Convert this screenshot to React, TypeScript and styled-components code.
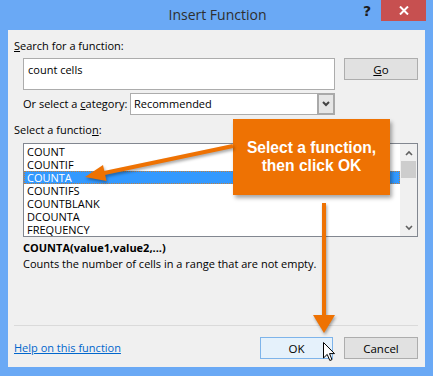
import React from 'react';
import styled, { createGlobalStyle } from 'styled-components';

const GlobalStyle = createGlobalStyle`
  html, body { margin: 0; padding: 0; background: #ffffff; }
  body { font-family: 'Open Sans', 'Liberation Sans', sans-serif; }
`;

const ORANGE = '#ee7203';

const Window = styled.div`
  position: relative;
  width: 433px;
  height: 376px;
  box-sizing: border-box;
  background: #6aa9f5;
  display: flex;
  flex-direction: column;
  overflow: hidden;
`;

const TitleBar = styled.div`
  height: 30px;
  flex: none;
  display: grid;
  grid-template-columns: 1fr auto 1fr;
  align-items: start;
`;

const Title = styled.div`
  grid-column: 2;
  font-size: 14px;
  line-height: 30px;
  color: #2e2e2e;
  padding-left: 2px;
`;

const TitleButtons = styled.div`
  grid-column: 3;
  display: flex;
  justify-content: flex-end;
  padding-right: 7px;
`;

const HelpGlyph = styled.div`
  width: 28px;
  height: 21px;
  font-family: 'DejaVu Sans', sans-serif;
  font-weight: bold;
  font-size: 14px;
  line-height: 22px;
  text-align: center;
  color: #1c1c1c;
`;

const CloseButton = styled.div`
  width: 45px;
  height: 21px;
  background: #c75050;
  display: flex;
  align-items: center;
  justify-content: center;
`;

const Client = styled.div`
  flex: 1;
  margin: 0 8px 9px 8px;
  background: #f0f0f0;
  padding: 0 7px 8px 6px;
  display: flex;
  flex-direction: column;
  font-size: 11px;
  color: #000;
`;

const Label = styled.div<{ $top?: number }>`
  line-height: 16px;
  margin-top: ${(p) => p.$top ?? 0}px;
  white-space: nowrap;
`;

const Key = styled.span`
  text-decoration: underline;
`;

const Row = styled.div<{ $top: number }>`
  display: flex;
  align-items: flex-start;
  margin-left: 9px;
  margin-top: ${(p) => p.$top}px;
`;

const SearchBox = styled.div`
  width: 312px;
  height: 32px;
  box-sizing: border-box;
  background: #fff;
  border: 1px solid #acacac;
  padding: 3px 4px;
  line-height: 16px;
`;

const Button = styled.div<{ $primary?: boolean; $width: number; $gap?: number }>`
  width: ${(p) => p.$width}px;
  height: 22px;
  margin-left: ${(p) => p.$gap ?? 0}px;
  box-sizing: border-box;
  background: ${(p) => (p.$primary ? '#e5f1fb' : '#e1e1e1')};
  border: 1px solid ${(p) => (p.$primary ? '#7eb4ea' : '#adadad')};
  display: flex;
  align-items: center;
  justify-content: center;
  font-size: 11.5px;
`;

const CategoryLabel = styled.div`
  width: 107px;
  line-height: 22px;
  white-space: nowrap;
`;

const Select = styled.div`
  width: 205px;
  height: 22px;
  box-sizing: border-box;
  background: #fff;
  border: 1px solid #acacac;
  display: flex;
`;

const SelectValue = styled.div`
  flex: 1;
  padding-left: 3px;
  line-height: 20px;
`;

const SelectArrow = styled.div`
  width: 18px;
  box-sizing: border-box;
  background: #e6e6e6;
  border: 2px solid #a9a9a9;
  margin: -1px -1px -1px 0;
  display: flex;
  align-items: center;
  justify-content: center;
`;

const ListBox = styled.div`
  margin: 5px 0 0 9px;
  height: 94px;
  box-sizing: border-box;
  background: #fff;
  border: 1px solid #828790;
  display: flex;
`;

const Items = styled.div`
  flex: 1;
  padding-top: 1px;
`;

const Item = styled.div<{ $selected?: boolean }>`
  height: 13px;
  line-height: 13px;
  padding-left: 3px;
  box-sizing: border-box;
  overflow: hidden;
  background: ${(p) => (p.$selected ? '#3399ff' : 'transparent')};
  color: ${(p) => (p.$selected ? '#fff' : '#000')};
  outline: ${(p) => (p.$selected ? '1px dotted #c08040' : 'none')};
  outline-offset: -1px;
`;

const ScrollBar = styled.div`
  width: 17px;
  background: #f0f0f0;
  display: flex;
  flex-direction: column;
  align-items: center;
`;

const ScrollArrow = styled.div`
  height: 17px;
  display: flex;
  align-items: center;
  justify-content: center;
`;

const ScrollTrack = styled.div`
  flex: 1;
`;

const Thumb = styled.div`
  width: 15px;
  height: 17px;
  background: #cdcdcd;
`;

const Syntax = styled.div`
  margin: 3px 0 0 9px;
  font-weight: bold;
  line-height: 16px;
`;

const Description = styled.div`
  margin-left: 9px;
  line-height: 16px;
`;

const Separator = styled.div`
  margin-top: auto;
  height: 1px;
  background: #dadada;
`;

const Footer = styled.div`
  margin-top: 11px;
  display: flex;
  align-items: center;
  gap: 11px;
`;

const HelpLink = styled.div`
  flex: 1;
  color: #0066cc;
  text-decoration: underline;
  line-height: 16px;
`;

const Callout = styled.div`
  position: absolute;
  left: 233px;
  top: 119px;
  width: 157px;
  height: 76px;
  background: ${ORANGE};
  box-shadow: 2px 3px 4px rgba(0, 0, 0, 0.35);
  color: #fff;
  font-family: 'Liberation Sans', Arial, sans-serif;
  font-weight: bold;
  font-size: 15.6px;
  line-height: 18px;
  text-align: center;
  display: flex;
  align-items: center;
  justify-content: center;
`;

const Overlay = styled.svg`
  position: absolute;
  left: 0;
  top: 0;
  pointer-events: none;
  filter: drop-shadow(1px 2px 1.5px rgba(0, 0, 0, 0.35));
`;

const Cursor = styled.svg`
  position: absolute;
  left: 323px;
  top: 342px;
`;

const Chevron = ({ up, c = '#555', sw = 2 }: { up?: boolean; c?: string; sw?: number }) => (
  <svg width={8} height={6} viewBox="0 0 8 6">
    <polyline
      points={up ? '1,5 4,2 7,5' : '1,1 4,4 7,1'}
      fill="none"
      stroke={c}
      strokeWidth={sw}
    />
  </svg>
);

const functions = ['COUNT', 'COUNTIF', 'COUNTA', 'COUNTIFS', 'COUNTBLANK', 'DCOUNTA', 'FREQUENCY'];

function App() {
  return (
    <>
      <GlobalStyle />
      <Window>
        <TitleBar>
          <Title>Insert Function</Title>
          <TitleButtons>
            <HelpGlyph>?</HelpGlyph>
            <CloseButton>
              <svg width="10" height="9" viewBox="0 0 10 9">
                <path d="M1 0.5 L9 8.5 M9 0.5 L1 8.5" stroke="#fff" strokeWidth="2" />
              </svg>
            </CloseButton>
          </TitleButtons>
        </TitleBar>
        <Client>
          <Label $top={8}>
            <Key>S</Key>earch for a function:
          </Label>
          <Row $top={4}>
            <SearchBox>count cells</SearchBox>
            <Button $width={74} $gap={9}>
              <span>
                <Key>G</Key>o
              </span>
            </Button>
          </Row>
          <Row $top={3}>
            <CategoryLabel>
              Or select a <Key>c</Key>ategory:
            </CategoryLabel>
            <Select>
              <SelectValue>Recommended</SelectValue>
              <SelectArrow>
                <Chevron c="#444" />
              </SelectArrow>
            </Select>
          </Row>
          <Label $top={7}>
            Select a functio<Key>n</Key>:
          </Label>
          <ListBox>
            <Items>
              {functions.map((f) => (
                <Item key={f} $selected={f === 'COUNTA'}>
                  {f}
                </Item>
              ))}
            </Items>
            <ScrollBar>
              <ScrollArrow>
                <Chevron up c="#606060" sw={1.6} />
              </ScrollArrow>
              <Thumb />
              <ScrollTrack />
              <ScrollArrow>
                <Chevron c="#606060" sw={1.6} />
              </ScrollArrow>
            </ScrollBar>
          </ListBox>
          <Syntax>COUNTA(value1,value2,...)</Syntax>
          <Description>Counts the number of cells in a range that are not empty.</Description>
          <Separator />
          <Footer>
            <HelpLink>Help on this function</HelpLink>
            <Button $primary $width={73}>
              OK
            </Button>
            <Button $width={74}>Cancel</Button>
          </Footer>
        </Client>
        <Callout>
          Select a function,
          <br />
          then click OK
        </Callout>
        <Overlay width="433" height="376" viewBox="0 0 433 376">
          <line x1="233" y1="146" x2="102" y2="173.5" stroke={ORANGE} strokeWidth="4" />
          <polygon points="85,177 103,165 106.5,181" fill={ORANGE} />
          <line x1="324" y1="203" x2="324" y2="317" stroke={ORANGE} strokeWidth="4" />
          <polygon points="313,315 335,315 324,333" fill={ORANGE} />
        </Overlay>
        <Cursor width="13" height="20" viewBox="0 0 13 20">
          <path
            d="M0.5 0.5 L0.5 16 L4.2 12.4 L6.8 18.5 L9 17.6 L6.5 11.6 L11.5 11.6 Z"
            fill="#fff"
            stroke="#000"
            strokeWidth="1"
            strokeLinejoin="round"
          />
        </Cursor>
      </Window>
    </>
  );
}

export default App;
